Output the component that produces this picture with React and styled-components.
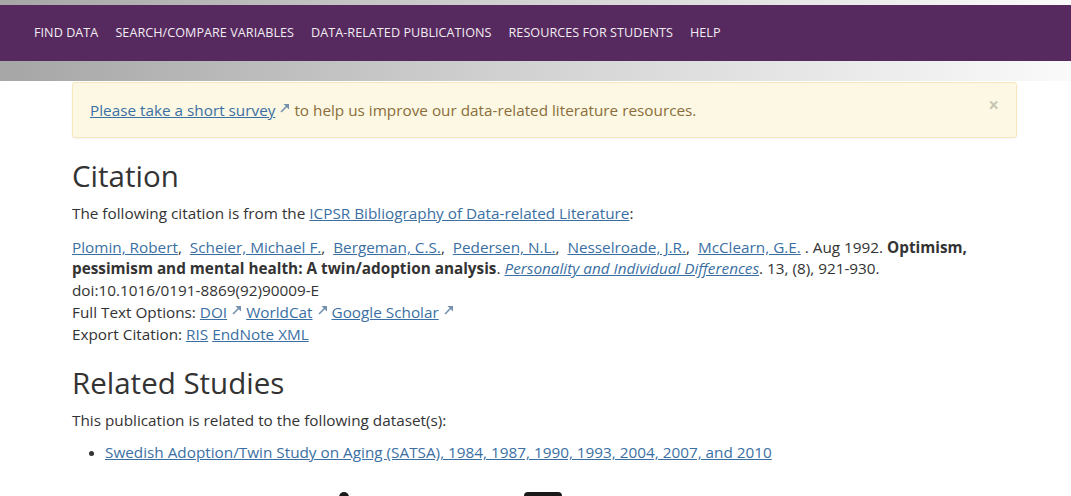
import styled, { createGlobalStyle } from 'styled-components';

const GlobalStyle = createGlobalStyle`
  body {
    margin: 0;
    font-family: 'Open Sans', 'Liberation Sans', sans-serif;
    font-size: 15.3px;
    line-height: 1.45;
    color: #333;
    background: #fff;
    overflow: hidden;
  }
`;

const Header = styled.header`
  background: linear-gradient(to right, #a6a6a6, #cfcfcf 45%, #fafafa);
  padding: 5px 0 20px;
`;

const NavBar = styled.nav`
  background: #572a5f;
  height: 55px;
  display: flex;
  align-items: center;
  padding: 1px 0 0 34px;
  gap: 17px;
`;

const NavItem = styled.a`
  color: #f2ecf3;
  font-size: 12.6px;
  text-transform: uppercase;
  text-decoration: none;
  letter-spacing: 0.05px;
`;

const Container = styled.main`
  width: 945px;
  margin: 0 auto;
  padding-top: 1px;
  transform: translateX(9px);
`;

const Alert = styled.div`
  position: relative;
  background: #fcf8e3;
  border: 1px solid #f6e8bd;
  border-radius: 3px;
  color: #8a6d3b;
  padding: 16px 17px;
  box-shadow: 0 1px 2px rgba(0, 0, 0, 0.05);
`;

const Close = styled.span`
  position: absolute;
  right: 17px;
  top: 13px;
  font-size: 19px;
  font-weight: 700;
  color: #000;
  opacity: 0.2;
  line-height: 1;
`;

const Link = styled.a`
  color: #3b6fa3;
  text-decoration: underline;
  font-style: ${p => (p.$italic ? 'italic' : 'normal')};
`;

const Heading = styled.h2`
  font-size: 29.5px;
  font-weight: 400;
  margin: ${p => p.$mt || 20}px 0 8px;
  line-height: 1.2;
  color: #333;
`;

const Para = styled.p`
  margin: 0 0 ${p => p.$mb || 0}px;
`;

const Bibliography = styled.div`
  line-height: 21.7px;
`;

const Ext = styled.svg`
  width: 10px;
  height: 10px;
  margin: 0 4px 0 5px;
  vertical-align: 3px;
`;

const List = styled.ul`
  margin: 0;
  padding-left: 33px;
  li::marker {
    font-size: 13px;
  }
`;

const Footer = styled.div`
  display: flex;
  gap: 175px;
  padding: 29px 0 0 267px;
`;

const FootIcon = styled.div`
  width: ${p => p.$w}px;
  height: 12px;
  background: #1a1a1a;
  border-radius: ${p => p.$r};
`;

const ExtIcon = () => (
  <Ext viewBox="0 0 10 10">
    <path d="M1 9 L7.2 2.8" stroke="#7391ad" strokeWidth="1.6" />
    <path d="M3.5 1 L9 1 L9 6.5 Z" fill="#7391ad" />
  </Ext>
);

const navItems = [
  'Find Data',
  'Search/Compare Variables',
  'Data-related Publications',
  'Resources for Students',
  'Help',
];

const authors = [
  'Plomin, Robert',
  'Scheier, Michael F.',
  'Bergeman, C.S.',
  'Pedersen, N.L.',
  'Nesselroade, J.R.',
  'McClearn, G.E.',
];

export default function App() {
  return (
    <>
      <GlobalStyle />
      <Header>
        <NavBar>
          {navItems.map(n => (
            <NavItem key={n} href="#">{n}</NavItem>
          ))}
        </NavBar>
      </Header>
      <Container>
        <Alert>
          <Link href="#">Please take a short survey</Link>
          <ExtIcon />to help us improve our data-related literature resources.
          <Close>×</Close>
        </Alert>

        <Heading $mt={20}>Citation</Heading>
        <Para $mb={13}>
          The following citation is from the{' '}
          <Link href="#">ICPSR Bibliography of Data-related Literature</Link>:
        </Para>
        <Bibliography>
          {authors.map((a, i) => (
            <span key={a}>
              <Link href="#">{a}</Link>
              {i < authors.length - 1 ? ',\u00a0 ' : ' '}
            </span>
          ))}
          . Aug 1992. <b>Optimism, pessimism and mental health: A twin/adoption analysis</b>.{' '}
          <Link href="#" $italic>Personality and Individual Differences</Link>. 13, (8), 921-930.
          <br />
          doi:10.1016/0191-8869(92)90009-E
          <br />
          Full Text Options: <Link href="#">DOI</Link><ExtIcon />
          <Link href="#">WorldCat</Link><ExtIcon />
          <Link href="#">Google Scholar</Link><ExtIcon />
          <br />
          Export Citation: <Link href="#">RIS</Link> <Link href="#">EndNote XML</Link>
        </Bibliography>

        <Heading $mt={20}>Related Studies</Heading>
        <Para $mb={10}>This publication is related to the following dataset(s):</Para>
        <List>
          <li>
            <Link href="#">
              Swedish Adoption/Twin Study on Aging (SATSA), 1984, 1987, 1990, 1993, 2004, 2007, and 2010
            </Link>
          </li>
        </List>
        <Footer>
          <FootIcon $w={10} $r="6px 6px 0 0" />
          <FootIcon $w={38} $r="4px 4px 0 0" />
        </Footer>
      </Container>
    </>
  );
}
